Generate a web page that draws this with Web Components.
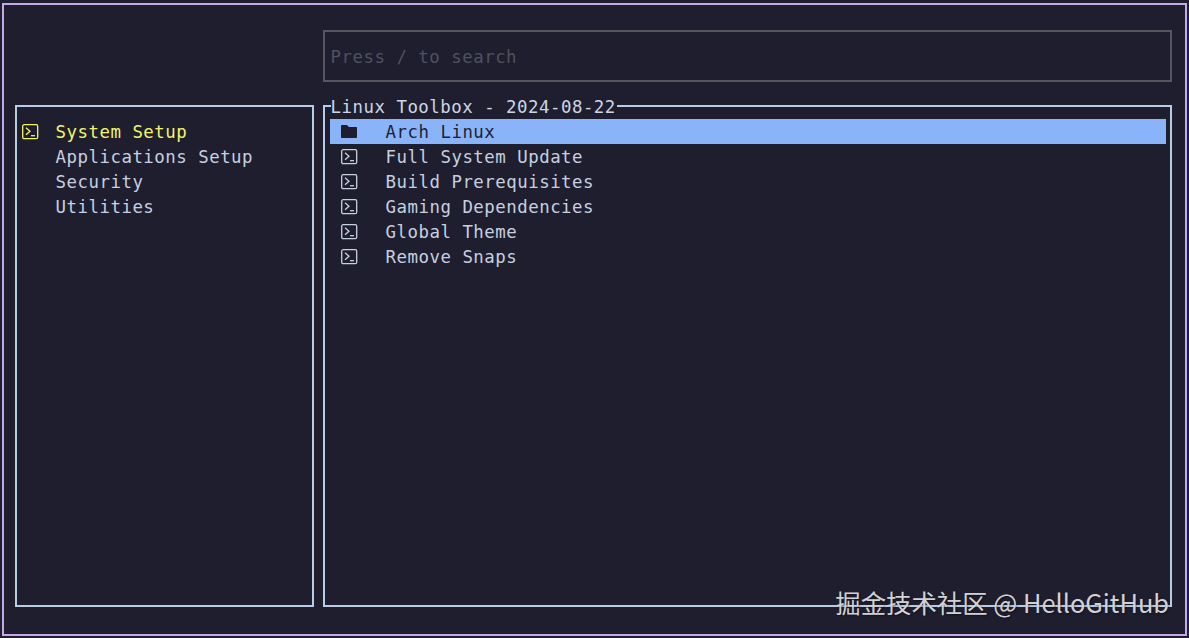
<!DOCTYPE html>
<html lang="en">
<head>
<meta charset="utf-8">
<title>Linux Toolbox</title>
<style>
  html, body { margin: 0; background: #1e1e2e; }
  body { padding: 3px 2px 2px 2px; font: 17.4px/25px "DejaVu Sans Mono", "Liberation Mono", monospace; }
</style>
</head>
<body>
<tb-app>
  <tb-search slot="search" placeholder="Press / to search"></tb-search>
  <tb-panel slot="side" style="--pad: 12px 0 0 4px">
    <tb-row icon="term" active text-x="34.6" icon-x="1">System Setup</tb-row>
    <tb-row text-x="34.6">Applications Setup</tb-row>
    <tb-row text-x="34.6">Security</tb-row>
    <tb-row text-x="34.6">Utilities</tb-row>
  </tb-panel>
  <tb-panel slot="main" heading="Linux Toolbox - 2024-08-22" style="--pad: 12px 4px 0 5px">
    <tb-row icon="folder" selected text-x="55.6" icon-x="11">Arch Linux</tb-row>
    <tb-row icon="term" text-x="55.6" icon-x="11">Full System Update</tb-row>
    <tb-row icon="term" text-x="55.6" icon-x="11">Build Prerequisites</tb-row>
    <tb-row icon="term" text-x="55.6" icon-x="11">Gaming Dependencies</tb-row>
    <tb-row icon="term" text-x="55.6" icon-x="11">Global Theme</tb-row>
    <tb-row icon="term" text-x="55.6" icon-x="11">Remove Snaps</tb-row>
  </tb-panel>
</tb-app>

<script>
// 外框 + 网格布局
class TbApp extends HTMLElement {
  constructor() {
    super();
    this.attachShadow({ mode: 'open' });
    this.shadowRoot.innerHTML = `
      <style>
        :host {
          display: block;
          position: relative;
          box-sizing: border-box;
          width: 1185px;
          height: 633px;
          border: 2px solid #c3a9ec;
          padding: 25px 13px 26px 11px;
        }
        .grid {
          display: grid;
          grid-template-columns: 299px 849px;
          grid-template-rows: 52px 502px;
          column-gap: 9px;
          row-gap: 23px;
        }
        .search { grid-column: 2; }
        /* 水印盖在边框上面 */
        .mark {
          position: absolute;
          right: 16px;
          bottom: 15px;
          font: 25.4px/34px "Noto Sans CJK SC", "Noto Sans", sans-serif;
          color: #d2d2d6;
          text-shadow: 1px 1px 2px rgba(0, 0, 0, .45);
          white-space: nowrap;
        }
      </style>
      <div class="grid">
        <div class="search"><slot name="search"></slot></div>
        <slot name="side"></slot>
        <slot name="main"></slot>
      </div>
      <div class="mark">掘金技术社区 @ HelloGitHub</div>
    `;
  }
}

class TbSearch extends HTMLElement {
  constructor() {
    super();
    this.attachShadow({ mode: 'open' });
  }

  connectedCallback() {
    this.shadowRoot.innerHTML = `
      <style>
        :host {
          display: flex;
          align-items: center;
          box-sizing: border-box;
          height: 52px;
          border: 2px solid #55565f;
          padding: 2px 0 0 5.6px;
          color: #50515f;
          letter-spacing: .5px;
        }
      </style>
      <span>${this.getAttribute('placeholder')}</span>
    `;
  }
}

class TbPanel extends HTMLElement {
  constructor() {
    super();
    this.attachShadow({ mode: 'open' });
  }

  connectedCallback() {
    const heading = this.getAttribute('heading');
    this.shadowRoot.innerHTML = `
      <style>
        :host {
          display: block;
          position: relative;
          box-sizing: border-box;
          height: 502px;
          border: 2px solid #b7cde6;
          padding: var(--pad);
        }
        .heading {
          position: absolute;
          left: 5.6px;
          top: -12px;
          padding-right: 1px;
          background: #1e1e2e;
          color: #cdd6e8;
          letter-spacing: .5px;
          line-height: 24px;
          height: 14px;
          white-space: nowrap;
        }
      </style>
      ${heading ? `<div class="heading">${heading}</div>` : ''}
      <slot></slot>
    `;
  }
}

const ICONS = {
  term: `<svg width="17" height="17" viewBox="0 0 17 17" fill="none" stroke="currentColor" stroke-width="1.3">
      <rect x=".7" y="1.700" width="15" height="14" rx="1.500"/>
      <path d="M4 4.800l4 3.400L4 11.800"/>
      <path d="M9 12.700h4"/>
    </svg>`,
  folder: `<svg width="17" height="17" viewBox="0 0 17 17" fill="currentColor">
      <path d="M0 2.700C0 2.300.3 2 .7 2h5.300l1.800 2h7.500c.4 0 .7.300.7.700v9.600c0 .4-.3.7-.7.7H.7c-.4 0-.7-.3-.7-.7z"/>
    </svg>`,
};

class TbRow extends HTMLElement {
  constructor() {
    super();
    this.attachShadow({ mode: 'open' });
  }

  connectedCallback() {
    const iconX = +this.getAttribute('icon-x') || 0;
    const textX = +this.getAttribute('text-x') || 0;
    const icon = ICONS[this.getAttribute('icon')] || '';
    this.shadowRoot.innerHTML = `
      <style>
        :host {
          display: flex;
          align-items: center;
          height: 25px;
          color: #c6d0e0;
          letter-spacing: .5px;
        }
        :host([active]) { color: #f2f56b; }
        :host([selected]) { background: #89b4fa; color: #1e1e2e; }
        .icon {
          display: flex;
          flex: none;
          box-sizing: border-box;
          width: ${textX}px;
          padding-left: ${iconX}px;
        }
        .text { padding-top: 2px; }
      </style>
      <span class="icon">${icon}</span><span class="text"><slot></slot></span>
    `;
  }
}

customElements.define('tb-app', TbApp);
customElements.define('tb-search', TbSearch);
customElements.define('tb-panel', TbPanel);
customElements.define('tb-row', TbRow);
</script>
</body>
</html>
